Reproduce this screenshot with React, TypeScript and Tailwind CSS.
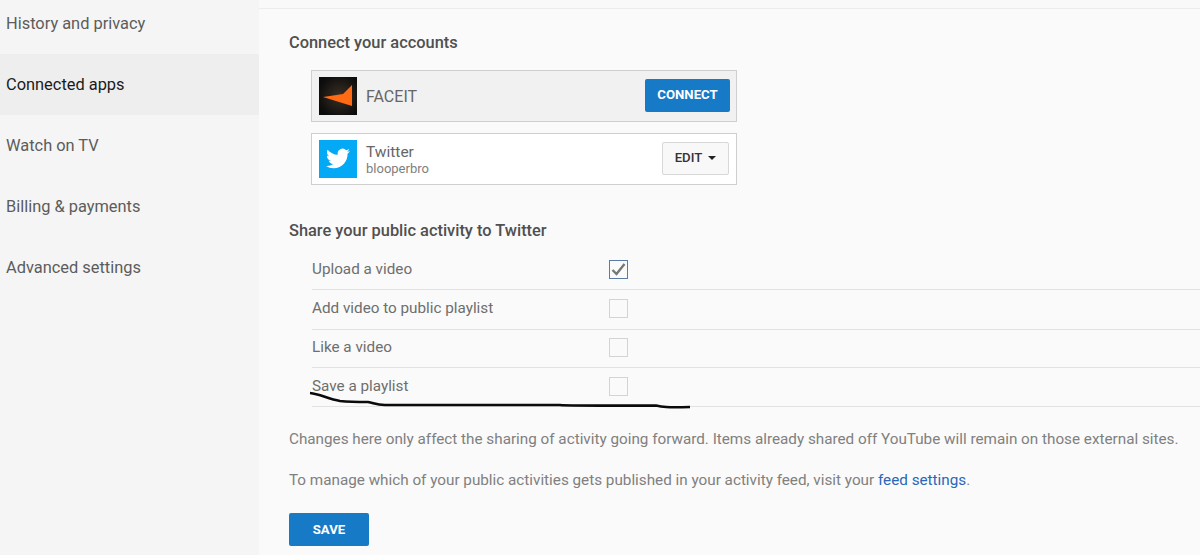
export default function App() {
  const nav = ["History and privacy", "Connected apps", "Watch on TV", "Billing & payments", "Advanced settings"];
  const rows: [string, boolean, string][] = [
    ["Upload a video", true, "h-[40px]"],
    ["Add video to public playlist", false, "h-[40px] pb-[2px]"],
    ["Like a video", false, "h-[38px] pb-[2px]"],
    ["Save a playlist", false, "h-[39px] pb-[2px]"],
  ];
  return (
    <div className="relative flex h-[555px] w-[1200px] overflow-hidden bg-[#fafafa] font-['Roboto',sans-serif]">
      <aside className="h-full w-[259px] shrink-0 bg-[#f5f5f5]">
        <div className="-mt-[7px]">
          {nav.map((n, i) => (
            <div
              key={n}
              className={`flex h-[61px] items-center pl-[6px] pt-[2px] text-[16.4px] ${i === 1 ? "bg-[#eeeeee] text-[#1a1a1a]" : "text-[#5c5c5c]"}`}
            >
              {n}
            </div>
          ))}
        </div>
      </aside>
      <main className="min-w-0 flex-1">
        <div className="h-[9px] border-b border-[#ececec] bg-[#f9f9f9]" />
        <div className="pl-[30px]">
          <h2 className="mt-[24px] text-[16.4px] leading-5 font-medium text-[#505050]">Connect your accounts</h2>
          <div className="ml-[22px] mt-[17px] flex w-[426px] flex-col gap-[11px]">
            <div className="flex h-[52px] items-center border border-[#cfcfcf] bg-[#f1f1f1] pl-[7px] pr-[6px]">
              <svg width="38" height="38" viewBox="0 0 38 38" className="shrink-0">
                <defs>
                  <radialGradient id="fg" cx="0.55" cy="0.5" r="0.6">
                    <stop offset="0" stopColor="#3a3025" />
                    <stop offset="1" stopColor="#0c0c0c" />
                  </radialGradient>
                </defs>
                <rect width="38" height="38" fill="url(#fg)" />
                <path d="M33 8 L33 29 L4 20 L24 17 Z" fill="#ff6a13" />
              </svg>
              <span className="ml-[9px] mt-px flex-1 text-[16px] text-[#666666]">FACEIT</span>
              <button className="mb-[2px] h-[33px] w-[85px] rounded-[2px] bg-[#167ac6] pb-px text-[13.2px] font-bold text-white">CONNECT</button>
            </div>
            <div className="flex h-[52px] items-center border border-[#cfcfcf] bg-white pl-[7px] pr-[7px]">
              <svg width="38" height="38" viewBox="0 0 38 38" className="shrink-0">
                <rect width="38" height="38" fill="#03a9f4" />
                <path
                  transform="translate(7 6.500)"
                  fill="#fff"
                  d="M23.95 4.57a10 10 0 0 1-2.82.77 4.96 4.96 0 0 0 2.16-2.72c-.95.55-2 .95-3.12 1.17a4.92 4.92 0 0 0-8.38 4.48C7.69 8.09 4.07 6.13 1.64 3.16a4.82 4.82 0 0 0-.67 2.48c0 1.71.87 3.21 2.19 4.1a4.9 4.9 0 0 1-2.23-.62v.06a4.92 4.92 0 0 0 3.95 4.83 4.9 4.9 0 0 1-2.21.08 4.94 4.94 0 0 0 4.6 3.42A9.87 9.87 0 0 1 0 19.54a14 14 0 0 0 7.56 2.21c9.05 0 14-7.5 14-13.98 0-.21 0-.42-.02-.63a9.94 9.94 0 0 0 2.41-2.57z"
                />
              </svg>
              <div className="ml-[9px] mt-px flex-1">
                <div className="text-[15.5px] leading-[18px] text-[#666666]">Twitter</div>
                <div className="text-[13px] leading-[16px] text-[#808080]">blooperbro</div>
              </div>
              <button className="mb-[2px] flex h-[33px] w-[67px] items-center justify-center gap-[6px] rounded-[2px] border border-[#d8d8d8] bg-[#f8f8f8] text-[13.2px] font-medium text-[#333333]">
                EDIT
                <span className="h-0 w-0 border-x-[4.5px] border-t-[4.5px] border-x-transparent border-t-[#222222]" />
              </button>
            </div>
          </div>
          <h2 className="mt-[36px] text-[16.4px] leading-5 font-medium text-[#505050]">Share your public activity to Twitter</h2>
          <div className="ml-[23px] mt-[9px]">
            {rows.map(([label, checked, h]) => (
              <div key={label} className={`flex items-center border-b border-[#e2e2e2] ${h}`}>
                <span className="w-[297px] text-[15.25px] text-[#6e6e6e]">{label}</span>
                <span className={`flex h-[19px] w-[19px] items-center justify-center border ${checked ? "border-[#5b7ba6]" : "border-[#d4d4d4]"} bg-[#fafafa]`}>
                  {checked && (
                    <svg width="15" height="13" viewBox="0 0 15 13">
                      <path d="M1.500 7 L5.500 11 L13.500 1" fill="none" stroke="#777777" strokeWidth="2.4" />
                    </svg>
                  )}
                </span>
              </div>
            ))}
          </div>
          <p className="mt-[22px] text-[15.25px] leading-5 text-[#808080]">
            Changes here only affect the sharing of activity going forward. Items already shared off YouTube will remain on those external sites.
          </p>
          <p className="mt-[21px] text-[15.25px] leading-5 text-[#808080]">
            To manage which of your public activities gets published in your activity feed, visit your <span className="text-[#2a67b8]">feed settings</span>.
          </p>
          <button className="mt-[23px] h-[33px] w-[80px] rounded-[2px] bg-[#167ac6] text-[13.2px] font-bold text-white">SAVE</button>
        </div>
      </main>
      <svg className="pointer-events-none absolute left-0 top-0" width="1200" height="555">
        <path
          d="M310 393 C320 394 328 399 340 401 C350 402 360 402 368 402 C374 403 376 405 385 405 L560 405 C570 406 600 405.500 656 405.500 C662 407 666 407.500 690 407"
          fill="none"
          stroke="#0a0a0a"
          strokeWidth="2.600"
        />
      </svg>
    </div>
  );
}
